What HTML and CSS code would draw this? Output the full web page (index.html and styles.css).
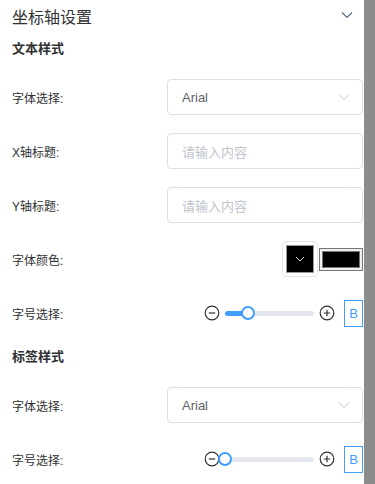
FILE: index.html
```html
<!DOCTYPE html>
<html lang="zh-CN">
  <head>
    <meta charset="UTF-8" />
    <meta name="viewport" content="width=device-width, initial-scale=1.0" />
    <title>坐标轴设置</title>
    <link rel="stylesheet" href="styles.css">
  </head>
  <body>
    <div class="frame">
      <div class="panel">
        <div class="panel-header">
          <span class="panel-title">坐标轴设置</span>
          <svg class="arrow" width="12" height="8" viewBox="0 0 12 8">
            <path d="M1 1.5 L6 6.5 L11 1.5" fill="none" stroke="#5c6b8a" stroke-width="1.2" />
          </svg>
        </div>

        <div class="section-title">文本样式</div>

        <div class="row">
          <label>字体选择:</label>
          <div class="select">
            <span>Arial</span>
            <svg width="12" height="8" viewBox="0 0 12 8">
              <path d="M1 1.5 L6 6.5 L11 1.5" fill="none" stroke="#c0c4cc" stroke-width="1" />
            </svg>
          </div>
        </div>

        <div class="row">
          <label>X轴标题:</label>
          <div class="input"><span class="placeholder">请输入内容</span></div>
        </div>

        <div class="row">
          <label>Y轴标题:</label>
          <div class="input"><span class="placeholder">请输入内容</span></div>
        </div>

        <div class="row">
          <label>字体颜色:</label>
          <div class="color-group">
            <div class="color-picker">
              <div class="color-box">
                <svg width="10" height="6" viewBox="0 0 10 6">
                  <path d="M1 1 L5 5 L9 1" fill="none" stroke="#ddd" stroke-width="1" />
                </svg>
              </div>
            </div>
            <div class="color-native"><div class="color-fill"></div></div>
          </div>
        </div>

        <div class="row">
          <label>字号选择:</label>
          <div class="size-group">
            <svg class="step" width="16" height="16" viewBox="0 0 16 16">
              <circle cx="8" cy="8" r="6.8" fill="none" stroke="#303133" stroke-width="1.2" />
              <path d="M4.8 8 H11.2" stroke="#303133" stroke-width="1.2" />
            </svg>
            <div class="slider">
              <div class="slider-fill" style="width: 26%"></div>
              <div class="slider-thumb" style="left: 26%"></div>
            </div>
            <svg class="step" width="16" height="16" viewBox="0 0 16 16">
              <circle cx="8" cy="8" r="6.8" fill="none" stroke="#303133" stroke-width="1.2" />
              <path d="M4.8 8 H11.2 M8 4.8 V11.2" stroke="#303133" stroke-width="1.2" />
            </svg>
            <div class="bold-btn">B</div>
          </div>
        </div>

        <div class="section-title">标签样式</div>

        <div class="row">
          <label>字体选择:</label>
          <div class="select">
            <span>Arial</span>
            <svg width="12" height="8" viewBox="0 0 12 8">
              <path d="M1 1.5 L6 6.5 L11 1.5" fill="none" stroke="#c0c4cc" stroke-width="1" />
            </svg>
          </div>
        </div>

        <div class="row">
          <label>字号选择:</label>
          <div class="size-group">
            <svg class="step" width="16" height="16" viewBox="0 0 16 16">
              <circle cx="8" cy="8" r="6.8" fill="none" stroke="#303133" stroke-width="1.2" />
              <path d="M4.8 8 H11.2" stroke="#303133" stroke-width="1.2" />
            </svg>
            <div class="slider">
              <div class="slider-fill" style="width: 0%"></div>
              <div class="slider-thumb" style="left: 0%"></div>
            </div>
            <svg class="step" width="16" height="16" viewBox="0 0 16 16">
              <circle cx="8" cy="8" r="6.8" fill="none" stroke="#303133" stroke-width="1.2" />
              <path d="M4.8 8 H11.2 M8 4.8 V11.2" stroke="#303133" stroke-width="1.2" />
            </svg>
            <div class="bold-btn">B</div>
          </div>
        </div>
      </div>
      <div class="scrollbar"></div>
    </div>
  </body>
</html>
```

FILE: styles.css
```css
body {
  margin: 0;
  font-family: "Liberation Sans", "Noto Sans CJK SC", sans-serif;
  background: #fff;
  color: #303133;
  overflow: hidden;
}
.frame {
  display: flex;
  height: 484px;
}
.panel {
  width: 351px;
  padding: 0 1px 0 12px;
  flex-shrink: 0;
}
.scrollbar {
  width: 12px;
  background: #8c8c8c;
  flex-shrink: 0;
}
.panel-header {
  height: 32px;
  display: flex;
  align-items: center;
  justify-content: space-between;
  padding-right: 10px;
}
.panel-title {
  font-size: 16px;
  color: #303133;
}
.arrow {
  margin-top: -2px;
}
.section-title {
  font-size: 13px;
  font-weight: bold;
  line-height: 20px;
  padding-top: 7px;
  margin-bottom: 11px;
  color: #303133;
}
.section-title + .row {
  margin-top: 0;
}
.row {
  height: 54px;
  display: flex;
  align-items: center;
  justify-content: space-between;
}
.row label {
  font-size: 12px;
  color: #303133;
}
.select,
.input {
  width: 196px;
  height: 36px;
  box-sizing: border-box;
  border: 1px solid #dcdfe6;
  border-radius: 4px;
  display: flex;
  align-items: center;
  justify-content: space-between;
  padding: 0 12px 0 14px;
  font-size: 13px;
  color: #606266;
}
.placeholder {
  color: #c0c4cc;
}
.color-group {
  display: flex;
  align-items: center;
  gap: 1px;
}
.color-picker {
  width: 36px;
  height: 36px;
  box-sizing: border-box;
  border: 1px solid #e6e6e6;
  border-radius: 4px;
  padding: 3px;
}
.color-box {
  height: 100%;
  background: #000;
  border: 1px solid #999;
  box-sizing: border-box;
  display: flex;
  align-items: center;
  justify-content: center;
}
.color-native {
  width: 44px;
  height: 23px;
  box-sizing: border-box;
  border: 1px solid #767676;
  background: #efefef;
  padding: 2px;
}
.color-fill {
  height: 100%;
  background: #000;
  border: 1px solid #777;
  box-sizing: border-box;
}
.size-group {
  display: flex;
  align-items: center;
}
.step {
  display: block;
}
.slider {
  position: relative;
  width: 89px;
  height: 5px;
  border-radius: 3px;
  background: #e4e7ed;
  margin: 0 5px;
}
.slider-fill {
  height: 100%;
  border-radius: 3px;
  background: #409eff;
}
.slider-thumb {
  position: absolute;
  top: 50%;
  width: 14px;
  height: 14px;
  box-sizing: border-box;
  border: 2px solid #409eff;
  border-radius: 50%;
  background: #fff;
  transform: translate(-50%, -50%);
}
.bold-btn {
  width: 19px;
  height: 27px;
  box-sizing: border-box;
  border: 1px solid #409eff;
  color: #409eff;
  font-size: 13px;
  display: flex;
  align-items: center;
  justify-content: center;
  margin-left: 9px;
}
```
